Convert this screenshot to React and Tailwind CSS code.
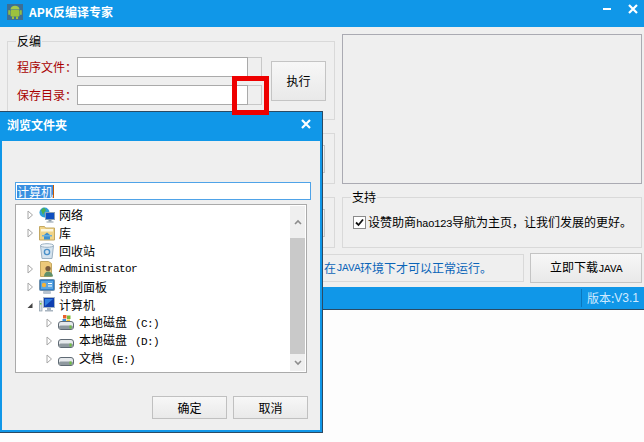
import React from 'react';

const cjk = { fontFamily: '"Noto Sans CJK SC", sans-serif' };
const mono = { fontFamily: '"Liberation Mono", monospace' };

const Android = () => (
  <svg width="16" height="16" viewBox="0 0 16 16" className="mr-[6px] shrink-0">
    <rect width="16" height="16" fill="#3d6f94" />
    <rect x="3.5" y="6" width="9" height="6.5" rx="1" fill="#9cc23d" />
    <path d="M3.5 5.5a4.5 3.8 0 0 1 9 0z" fill="#a5c94a" />
    <rect x="1.3" y="6" width="1.6" height="5" rx="0.8" fill="#9cc23d" />
    <rect x="13.1" y="6" width="1.6" height="5" rx="0.8" fill="#9cc23d" />
    <rect x="5" y="12.5" width="2" height="2.5" fill="#9cc23d" />
    <rect x="9" y="12.5" width="2" height="2.5" fill="#9cc23d" />
  </svg>
);

const CloseX = () => (
  <svg width="10" height="10" viewBox="0 0 10 10">
    <path d="M1 1l8 8M9 1L1 9" stroke="#fff" strokeWidth="2.2" />
  </svg>
);

const Arrow = ({ open }) => (
  <svg width="8" height="10" viewBox="0 0 8 10" className="shrink-0">
    {open ? (
      <path d="M6.5 3v5H1.5z" fill="#444" />
    ) : (
      <path d="M2 1l4.5 4L2 9z" fill="#fff" stroke="#a6a6a6" />
    )}
  </svg>
);

const Network = () => (
  <svg width="16" height="16" viewBox="0 0 16 16">
    <circle cx="5.5" cy="5.5" r="5" fill="#2d9fd8" />
    <path d="M2 3l3-2.5 2 2.5-2 3-1 2z" fill="#4fae4f" />
    <rect x="6.5" y="5.5" width="9" height="7" fill="#0f4fc0" stroke="#8aa0b4" />
    <rect x="9.5" y="13" width="3" height="1.5" fill="#8a9aa8" />
    <rect x="7.5" y="14.5" width="7" height="1" fill="#8a9aa8" />
  </svg>
);

const Library = () => (
  <svg width="16" height="16" viewBox="0 0 16 16">
    <path d="M0.5 1.5h5l1 1.5h9v12h-15z" fill="#f1d488" stroke="#c4a862" />
    <rect x="2" y="4" width="12" height="2.5" fill="#fdf6dc" />
    <path d="M5 10l3-2.5 3 2.5v4.5H5z" fill="#3f8fce" />
    <rect x="3" y="10" width="10" height="1.5" fill="#6ab0e0" />
  </svg>
);

const Recycle = () => (
  <svg width="16" height="16" viewBox="0 0 16 16">
    <path d="M1.5 2.5h13l-1.5 13H3z" fill="#d5e3ee" stroke="#9ab0c2" />
    <ellipse cx="8" cy="2.5" rx="6.5" ry="1.8" fill="#eef4f8" stroke="#9ab0c2" />
    <circle cx="8" cy="9" r="2.6" fill="none" stroke="#4a90c8" strokeWidth="1.4" />
  </svg>
);

const UserFolder = () => (
  <svg width="16" height="16" viewBox="0 0 16 16">
    <path d="M1.5 0.5h8l3 2v13h-11z" fill="#edc97a" stroke="#c4a862" />
    <circle cx="9" cy="7.5" r="2.6" fill="#7a5c3e" />
    <path d="M5 15.5c0-3 1.8-5 4-5s5 2 5 5z" fill="#5f8f6a" />
  </svg>
);

const Panel = () => (
  <svg width="16" height="16" viewBox="0 0 16 16">
    <rect x="0.5" y="0.5" width="15" height="11" rx="1" fill="#2f80cc" stroke="#6f90ad" />
    <rect x="2" y="2" width="12" height="8" fill="#5aa5e2" />
    <circle cx="5" cy="6" r="2.2" fill="#f2b33d" />
    <path d="M9 4.5h4M9 7h4" stroke="#fff" strokeWidth="1.2" />
    <rect x="4" y="12" width="8" height="3" rx="1" fill="#b8c4cf" />
  </svg>
);

const Computer = () => (
  <svg width="16" height="16" viewBox="0 0 16 16">
    <rect x="0.5" y="4" width="2.5" height="10" fill="#d8dde2" stroke="#8a9aa8" strokeWidth="0.7" />
    <rect x="1" y="6" width="1.5" height="1.5" fill="#6fc23c" />
    <rect x="4.5" y="0.5" width="11" height="10" fill="#0f3fb0" stroke="#a5b6c6" />
    <path d="M6 2h8l-8 7z" fill="#2f7fe0" />
    <rect x="8" y="11" width="4" height="2" fill="#a8b4c0" />
    <rect x="6" y="13" width="8" height="1.5" fill="#a8b4c0" />
  </svg>
);

const Drive = ({ win }) => (
  <svg width="16" height="16" viewBox="0 0 16 16">
    {win && (
      <g>
        <rect x="5" y="0" width="3.5" height="3.5" fill="#e8612c" />
        <rect x="9" y="0.5" width="3.5" height="3.5" fill="#7cb83a" />
        <rect x="4.5" y="4" width="3.5" height="3" fill="#3a8fd8" />
        <rect x="8.5" y="4.5" width="3.5" height="3" fill="#f2c230" />
      </g>
    )}
    <rect x="0.5" y="6.5" width="15" height="8" rx="2.5" fill="#e6e9ec" stroke="#5f6a74" />
    <rect x="1" y="10.5" width="14" height="3.5" rx="1.5" fill="#8f999f" />
    <rect x="11.5" y="10.5" width="2" height="3" fill="#6fc23c" />
  </svg>
);

const items = [
  { label: '网络', icon: <Network />, arrow: true, pad: 'pl-[10px]' },
  { label: '库', icon: <Library />, arrow: true, pad: 'pl-[10px]' },
  { label: '回收站', icon: <Recycle />, pad: 'pl-[10px]' },
  { label: 'Administrator', icon: <UserFolder />, arrow: true, pad: 'pl-[10px]', mono: true },
  { label: '控制面板', icon: <Panel />, arrow: true, pad: 'pl-[10px]' },
  { label: '计算机', icon: <Computer />, open: true, pad: 'pl-[10px]' },
  { label: '本地磁盘', tail: '(C:)', icon: <Drive win />, arrow: true, pad: 'pl-[29px]' },
  { label: '本地磁盘', tail: '(D:)', icon: <Drive />, arrow: true, pad: 'pl-[29px]' },
  { label: '文档', tail: '(E:)', icon: <Drive />, arrow: true, pad: 'pl-[29px]' },
];

const TreeRow = ({ item }) => (
  <div className={`flex h-[18px] items-center ${item.pad}`}>
    <div className="w-[8px] shrink-0">
      {(item.arrow || item.open) && <Arrow open={item.open} />}
    </div>
    <div className="ml-[5px] w-[16px] shrink-0">{item.icon}</div>
    <span className={`${item.tail ? 'ml-[5px]' : 'ml-[4px]'} whitespace-nowrap text-black ${item.mono ? 'text-[11px] tracking-[-0.6px]' : 'text-xs'}`}
      style={item.mono ? mono : undefined}>
      {item.label}
      {item.tail && (
        <span className="ml-[8px] text-[11px] tracking-[-0.6px]" style={mono}>{item.tail}</span>
      )}
    </span>
  </div>
);

const Dialog = () => (
  <div className="absolute left-0 top-[111px] flex h-[322px] w-[323px] flex-col border border-[#2b4a63] border-l-0 bg-[#1097e8] pr-[2px] pb-[2px] pl-[2px]">
    <div className="flex h-[29px] shrink-0 items-center justify-between pb-[3px] pl-[5px] pr-[9px]">
      <span className="text-xs font-bold text-white">浏览文件夹</span>
      <div className="mb-[2px] flex"><CloseX /></div>
    </div>
    <div className="flex flex-1 flex-col bg-[#efefef] pl-[13px] pr-[9px]">
      <div className="mt-[41px] flex h-[18px] items-center border border-[#4fa3e8] bg-white pl-[1px]">
        <span className="border-r border-[#c85a00] bg-[#3a8fe0] text-xs leading-[13px] text-white">计算机</span>
      </div>
      <div className="mr-[4px] mt-[4px] flex h-[169px] border border-[#aaaaaa] bg-white pb-[1px] pr-[1px] pt-[1px]">
        <div className="flex-1">
          {items.map((item, i) => <TreeRow key={i} item={item} />)}
        </div>
        <div className="flex w-[15px] flex-col items-center bg-[#efefef]">
          <div className="flex h-[32px] w-full items-center justify-center">
            <svg width="8" height="6" viewBox="0 0 8 6"><path d="M1 5l3-3 3 3" fill="none" stroke="#8c8c8c" strokeWidth="1.6" /></svg>
          </div>
          <div className="w-full flex-1 bg-[#c9c9c9]" />
          <div className="flex h-[17px] w-full items-center justify-center">
            <svg width="8" height="6" viewBox="0 0 8 6"><path d="M1 1l3 3 3-3" fill="none" stroke="#8c8c8c" strokeWidth="1.6" /></svg>
          </div>
        </div>
      </div>
      <div className="mt-[23px] flex justify-end gap-[6px] pr-[3px]">
        <button className="h-[23px] w-[75px] border border-[#c0c0c0] bg-gradient-to-b from-[#f7f7f7] to-[#e9e9e9] text-xs text-black">确定</button>
        <button className="h-[23px] w-[75px] border border-[#c0c0c0] bg-gradient-to-b from-[#f7f7f7] to-[#e9e9e9] text-xs text-black">取消</button>
      </div>
    </div>
  </div>
);

const PathRow = ({ label }) => (
  <div className="flex h-5 items-center">
    <span className="w-[61px] shrink-0 pl-[1px] text-xs whitespace-nowrap text-[#a80000]">{label}</span>
    <div className="h-5 w-[171px] border border-[#aaaaaa] bg-white" />
    <div className="h-5 w-[14px] border border-l-0 border-[#c8c8c8] bg-[#efefef]" />
  </div>
);

const Group = ({ title, className, children }) => (
  <div className={`relative border border-[#d9d9d9] ${className}`}>
    {title && <span className="absolute left-[8px] top-[-9px] bg-[#efefef] px-[1px] text-xs leading-[16px] text-black">{title}</span>}
    {children}
  </div>
);

const GreyButton = ({ className, children }) => (
  <button className={`border border-[#c4c4c4] bg-gradient-to-b from-[#f7f7f7] to-[#e9e9e9] text-xs text-black ${className}`}>{children}</button>
);

export default function App() {
  return (
    <div className="relative h-[442px] w-[644px] overflow-hidden bg-[#fdfdfd]" style={cjk}>
      <div className="flex h-[310px] flex-col border-b border-[#2b4a63] bg-[#efefef]">
        <div className="flex h-[27px] shrink-0 items-start justify-between bg-[#1097e8] pl-[7px] pr-[6px] pt-[4px]">
          <div className="flex items-center">
            <Android />
            <span className="text-xs font-bold text-white">APK反编译专家</span>
          </div>
          <div className="flex items-center gap-[17px]">
            <div className="h-[2px] w-[8px] bg-white" />
            <CloseX />
          </div>
        </div>
        <div className="flex flex-1 gap-[7px] pl-[7px] pr-[2px] pt-[7px]">
          <div className="flex w-[328px] shrink-0 flex-col pt-[7px]">
            <Group title="反编" className="flex h-[79px] items-start pl-[8px] pt-[15px]">
              <div className="flex flex-col gap-[8px]">
                <PathRow label="程序文件：" />
                <PathRow label="保存目录：" />
              </div>
              <GreyButton className="ml-[9px] mt-[4px] h-10 w-[55px]">执行</GreyButton>
            </Group>
            <Group className="mt-[13px] flex h-[51px] items-start justify-end pr-[9px] pt-[11px]">
              <GreyButton className="h-[28px] w-[55px]" />
            </Group>
            <Group className="mt-[13px] flex h-[51px] items-start justify-end pr-[9px] pt-[11px]">
              <GreyButton className="h-[28px] w-[55px]" />
            </Group>
          </div>
          <div className="flex flex-1 flex-col">
            <div className="h-[150px] border border-[#aaaab2] bg-[#efefef]" />
            <Group title="支持" className="mt-[13px] flex h-[51px] items-center pl-[10px]">
              <div className="flex h-[13px] w-[13px] items-center justify-center border border-[#8a8a8a] bg-white">
                <svg width="9" height="9" viewBox="0 0 9 9"><path d="M1 4.5l2.5 2.5L8 1.5" fill="none" stroke="#111" strokeWidth="1.8" /></svg>
              </div>
              <span className="ml-[2px] text-xs whitespace-nowrap text-black">设赞助商<span style={mono} className="text-[11px] tracking-[-0.6px]">hao123</span>导航为主页，让我们发展的更好。</span>
            </Group>
          </div>
        </div>
        <div className="mb-[4px] flex h-[30px] shrink-0 gap-[6px] pl-[7px] pr-[2px]">
          <div className="mb-[1px] mt-[1px] flex w-[517px] items-center justify-end border border-[#d9d9d9] pr-[31px] text-xs whitespace-nowrap text-[#0a64b8]">
            在<span className="text-[11px] tracking-[-0.6px]" style={mono}>JAVA</span>环境下才可以正常运行。
          </div>
          <GreyButton className="w-[112px]">
            立即下载<span className="text-[11px] tracking-[-0.6px]" style={mono}>JAVA</span>
          </GreyButton>
        </div>
        <div className="flex h-[22px] shrink-0 items-center justify-end bg-[#1097e8]">
          <div className="flex h-[18px] w-[63px] items-center border-l border-[#0b78bd] pl-[5px] text-xs whitespace-nowrap text-[#cfeaff]">
            版本:<span style={{ fontFamily: '"Liberation Sans", sans-serif' }}>V3.1</span>
          </div>
        </div>
      </div>
      <Dialog />
      {/* red marker round the second browse button */}
      <div className="absolute left-[232px] top-[76px] h-[39px] w-[37px] border-[5px] border-[#ee0000]" />
    </div>
  );
}
